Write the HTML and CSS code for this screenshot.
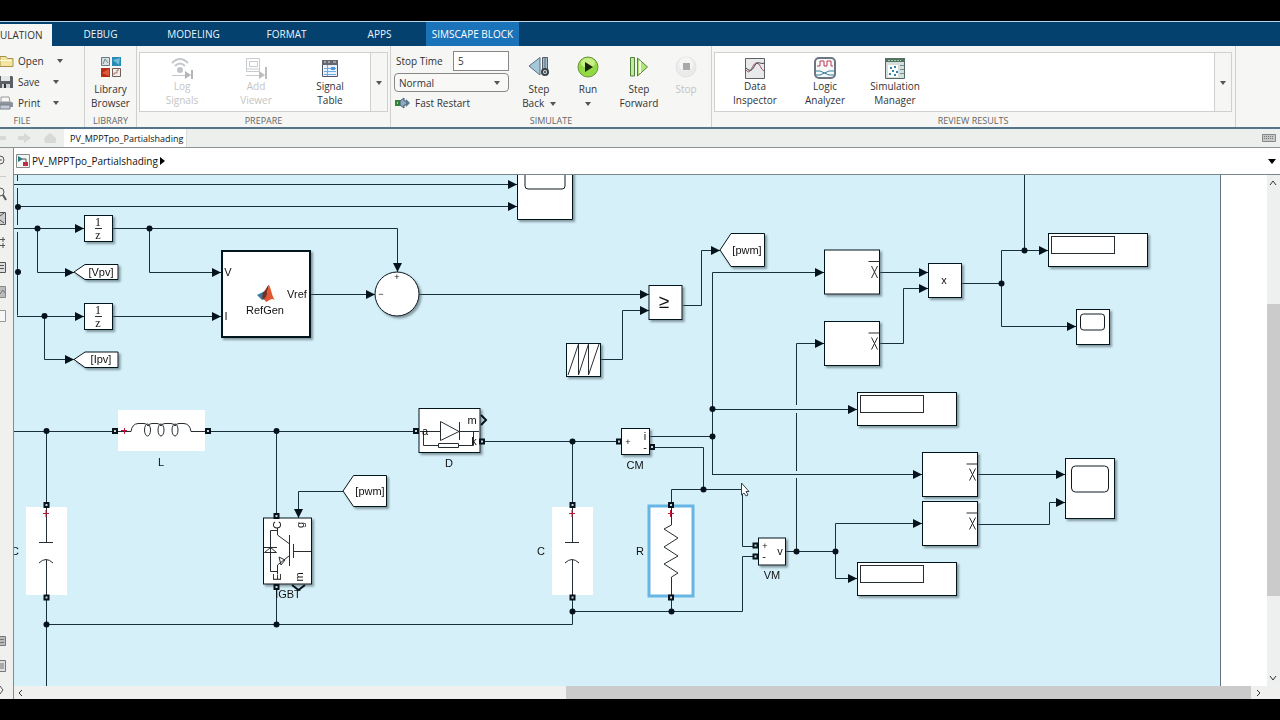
FILE: index.html
```html
<!DOCTYPE html>
<html lang="en">
<head>
<meta charset="utf-8">
<title>PV_MPPTpo_Partialshading</title>
<link rel="stylesheet" href="styles.css">
</head>
<body>
<div class="app">
  <nav class="tabs">
    <button class="tab tab-active">ULATION</button>
    <button class="tab">DEBUG</button>
    <button class="tab">MODELING</button>
    <button class="tab">FORMAT</button>
    <button class="tab">APPS</button>
    <button class="tab tab-context">SIMSCAPE BLOCK</button>
  </nav>

  <div class="ribbon">
    <section class="group group-file">
      <div class="group-body file-list">
        <button class="row-btn"><svg width="14" height="14" viewBox="0 0 14 14"><path d="M0 2.500H6L7.500 4.500H13V12.500H0Z" fill="#f3e5a0" stroke="#a8914a"/><path d="M0 6.500H11" stroke="#fffbe0"/></svg>Open<i class="caret"></i></button>
        <button class="row-btn"><svg width="14" height="14" viewBox="0 0 14 14"><path d="M0 1H12L13 2V13H0Z" fill="#5b5f66"/><path d="M1 1H10V6H1Z" fill="#e8e8ea"/><path d="M2 9H10V13H2Z" fill="#d0d2d6"/><path d="M4 9H6V13H4Z" fill="#333"/></svg>Save<i class="caret"></i></button>
        <button class="row-btn"><svg width="14" height="14" viewBox="0 0 14 14"><path d="M1 1H9L10 6H1Z" fill="#f7f7f7" stroke="#999"/><path d="M0 6H12L13 7V11H0Z" fill="#8d939c"/><path d="M0 9H10V13H0Z" fill="#c6cdd8" stroke="#7a828c"/></svg>Print<i class="caret"></i></button>
      </div>
      <h2 class="group-title">FILE</h2>
    </section>

    <section class="group group-library">
      <div class="group-body">
        <button class="big-btn low">
          <svg width="22" height="22" viewBox="0 0 22 22"><path d="M1.500 1.500H9.500V9.500H1.500Z" fill="#d8dfe2" stroke="#667b86"/><path d="M3 8L5 3 8 7" fill="none" stroke="#6d8b94"/><path d="M12 1H21V10H12Z" fill="#278cb5"/><path d="M13 4L20 2 19 9" fill="#71bcd6"/><path d="M1 12H10V21H1Z" fill="#b82d16"/><path d="M2 17L9 13V20Z" fill="#dd5b3d"/><path d="M12.500 12.500H20.500V20.500H12.500Z" fill="#eee" stroke="#765c58"/><path d="M14 19V17H17V14H19" fill="none" stroke="#a7776d"/></svg>
          <span>Library<br>Browser</span>
        </button>
      </div>
      <h2 class="group-title">LIBRARY</h2>
    </section>

    <section class="group group-prepare">
      <div class="group-body">
        <div class="gallery">
          <button class="big-btn" disabled>
            <svg width="22" height="22" viewBox="0 0 22 22"><g fill="none" stroke="#c4c7cc" stroke-width="2"><path d="M1 6Q9 -2 17 6M4 9Q9 4 14 9"/><path d="M1 18.500H15" stroke-width="1"/></g><circle cx="9" cy="13" r="3" fill="#c1c4c9"/><path d="M14 14L20 18 14 22ZM20 13H22V22H20Z" fill="#b5b5b8"/></svg>
            <span>Log<br>Signals</span>
          </button>
          <button class="big-btn" disabled>
            <svg width="22" height="22" viewBox="0 0 22 22"><g fill="none" stroke="#c8ccd0"><path d="M1.500 1.500H14.500V14.500H1.500ZM4.500 4.500H12.500V9.500H4.500ZM2 12H14M1 18.500H15"/></g><path d="M14 14L20 18 14 22ZM20 10H22V22H20Z" fill="#bdbdc0"/></svg>
            <span>Add<br>Viewer</span>
          </button>
          <button class="big-btn">
            <svg width="22" height="22" viewBox="0 0 22 22"><path d="M3.500 3.500H18.500V19.500H3.500Z" fill="#e9f2fc" stroke="#556"/><path d="M3 3H19V8H3Z" fill="#626770"/><path d="M5 5H7M9 5H11M14 5H17" stroke="#ddd"/><path d="M5 11.500H17M5 14.500H17M5 17.500H17" stroke="#6facdf" stroke-width="1"/><path d="M12 10H16V13H12Z" fill="#4c98db"/><path d="M8.500 8V19" stroke="#99b"/></svg>
            <span>Signal<br>Table</span>
          </button>
          <button class="more" aria-label="More prepare tools"><i class="caret"></i></button>
        </div>
      </div>
      <h2 class="group-title">PREPARE</h2>
    </section>

    <section class="group group-simulate">
      <div class="group-body simulate">
        <div class="settings">
          <div class="stop-row"><label for="stop">Stop Time</label><input id="stop" class="stop" type="text" value="5"></div>
          <div class="mode-wrap"><select class="mode" aria-label="Simulation mode"><option>Normal</option></select><i class="caret"></i></div>
          <button class="row-btn fast"><svg width="16" height="12" viewBox="0 0 16 12"><path d="M0 3H5V9H0Z" fill="#34833a"/><path d="M2 5H3V7H2Z" fill="#9fdd90"/><path d="M5 4L9 1V4H12V8H9V11L5 8Z" fill="#8fa9bf" stroke="#415a70"/><path d="M11 2L15 6 11 10Z" fill="#587891"/></svg>Fast Restart</button>
        </div>
        <div class="run-buttons">
          <button class="big-btn low">
            <svg width="22" height="22" viewBox="0 0 22 22"><path d="M1 10L12 1.500V19Z" fill="#a5c8d8" stroke="#566f80"/><path d="M14.500 1.500H19.500V18H14.500Z" fill="#a7bdca" stroke="#52606d"/><path d="M17 2V18" stroke="#526b7a"/><circle cx="17" cy="16" r="3" fill="#e5e8ea" stroke="#39434b" stroke-width="2"/><circle cx="17" cy="16" r="1" fill="#333"/></svg>
            <span>Step<br>Back <i class="caret caret-gap"></i></span>
          </button>
          <button class="big-btn low">
            <svg width="24" height="22" viewBox="0 0 24 22"><circle cx="12" cy="11" r="10" fill="#93d944" stroke="#659339"/><ellipse cx="12" cy="7" rx="7" ry="5" fill="#c8ef85"/><path d="M9 6L17 11 9 16Z" fill="#17240e"/></svg>
            <span>Run<br><i class="caret"></i></span>
          </button>
          <button class="big-btn low">
            <svg width="22" height="22" viewBox="0 0 22 22"><path d="M2.500 1.500H6.500V20H2.500Z" fill="#c6e7a3" stroke="#4f833a"/><path d="M9.500 2L19.500 11 9.500 20Z" fill="#aee579" stroke="#4f833a"/><path d="M12 5V17" stroke="#f1ffe0" stroke-width="2"/></svg>
            <span>Step<br>Forward</span>
          </button>
          <button class="big-btn low" disabled>
            <svg width="22" height="22" viewBox="0 0 22 22"><circle cx="11" cy="11" r="10" fill="#ebebeb" stroke="#e2e2e2"/><circle cx="11" cy="8" r="7" fill="#f5f5f5"/><path d="M8 7H15V14H8Z" fill="#a9a9a9"/></svg>
            <span>Stop</span>
          </button>
        </div>
      </div>
      <h2 class="group-title">SIMULATE</h2>
    </section>

    <section class="group group-review">
      <div class="group-body">
        <div class="gallery gallery-review">
          <button class="big-btn">
            <svg width="22" height="22" viewBox="0 0 22 22"><path d="M1.500 1.500H20.500V21.500H1.500Z" fill="#e8e9ea" stroke="#5e6266"/><path d="M2 13C7 20 8 5 13 6C17 7 16 12 20 14" fill="none" stroke="#a04a5b"/><path d="M2 11C7 16 9 12 11 8C14 3 17 8 20 6" fill="none" stroke="#333b42"/></svg>
            <span>Data<br>Inspector</span>
          </button>
          <button class="big-btn">
            <svg width="24" height="22" viewBox="0 0 24 22"><rect x="2" y="1" width="20" height="20" rx="4" fill="#f8fafa" stroke="#6c7582" stroke-width="2"/><path d="M4 9H7V4H11V9H14V4H18V9H20" fill="none" stroke="#bd3858"/><path d="M3 14H7L16 18H21M3 18H7L16 14H21" fill="none" stroke="#317f9d"/></svg>
            <span>Logic<br>Analyzer</span>
          </button>
          <button class="big-btn">
            <svg width="22" height="22" viewBox="0 0 22 22"><path d="M1.500 1.500H20.500V21.500H1.500Z" fill="#d4dfdc" stroke="#526967"/><path d="M1 1H21V5H1Z" fill="#547168"/><path d="M4 3.500H17" stroke="#a7d18c" stroke-dasharray="2 1"/><path d="M4 8H14V20H4Z" fill="#fff"/><path d="M6 10H8V12H6ZM10 9H12V11H10ZM8 13H10V15H8ZM12 14H14V16H12ZM5 16H7V18H5ZM10 17H12V19H10Z" fill="#3685ae"/><path d="M16 8.500H20M16 12.500H20M16 16.500H20" stroke="#778b88"/></svg>
            <span>Simulation<br>Manager</span>
          </button>
          <button class="more" aria-label="More review tools"><i class="caret"></i></button>
        </div>
      </div>
      <h2 class="group-title">REVIEW RESULTS</h2>
    </section>
  </div>

  <div class="docbar">
    <div class="history">
      <svg width="64" height="14" viewBox="0 0 64 14"><g fill="#d8d8d6"><path d="M0 5H6V9H0ZM18 5H24V2L31 7 24 12V9H18ZM44 7L50 2 56 7V12H45Z"/></g></svg>
    </div>
    <button class="doc-tab">PV_MPPTpo_Partialshading</button>
    <button class="keyboard" aria-label="Keyboard"><svg width="14" height="8" viewBox="0 0 14 8"><path d="M.5 .5H13.500V7.500H.5Z" fill="#c6c8c8" stroke="#868a8a"/><path d="M2 2.500H12M2 4.500H12" stroke="#777" stroke-dasharray="1 1"/></svg></button>
  </div>

  <div class="workspace">
    <aside class="palette">
      <svg width="13" height="180" viewBox="0 148 13 180"><g fill="none" stroke="#555"><circle cx="0" cy="160" r="4"/><path d="M-2 160H2"/><path d="M0 176.500H6" stroke="#ccc"/><circle cx="0" cy="192" r="4" stroke-width="1"/><path d="M3 195L6 200" stroke-width="2"/><path d="M-1 212.500H5.500V224.500H-1M0 216L4 213M0 220L4 223" fill="#ccc"/><path d="M0 239.500H5M0 245.500H5M3 237V242M3 243V248"/><path d="M-1 262.500H5.500V272.500H-1M0 265.500H4M0 268.500H4" fill="#ddd"/><path d="M-1 286.500H5.500V297.500H-1" fill="#bbb" stroke="#888"/><path d="M0 294L3 290 5 293" stroke="#777"/><path d="M-1 310.500H5.500V321.500H-1" fill="#f7f7f7" stroke="#999"/></g></svg>
      <svg width="13" height="64" viewBox="0 634 13 64"><g fill="#bbb" stroke="#777"><path d="M-1 635.500H5.500V644.500H-1M0 638.500H4M0 641.500H4"/><path d="M-1 659.500H5.500V670.500H-1M1 662V668M3 662V668" fill="#ddd"/><path d="M0 685L3 689 0 693" fill="none" stroke="#555"/></g></svg>
    </aside>
    <main class="editor">
      <div class="crumbs">
        <svg width="14" height="14" viewBox="0 0 14 14"><path d="M.5 .5H13.500V13.500H.5Z" fill="#f3f4f4" stroke="#888"/><path d="M2 2L7 5 2 8Z" fill="#237e82"/><path d="M6 5H10V8" fill="none" stroke="#555"/><path d="M7 8H12V12H7Z" fill="#c02c45"/></svg>
        <a class="crumb" href="#model">PV_MPPTpo_Partialshading</a>
        <svg width="6" height="8" viewBox="0 0 6 8"><path d="M0 0L5 4 0 8Z"/></svg>
        <button class="crumb-menu" aria-label="Model list"><svg width="8" height="5" viewBox="0 0 8 5"><path d="M0 0H8L4 5Z"/></svg></button>
      </div>
      <div class="view">
        <div class="canvas" id="model">
          <svg class="diagram" width="1206" height="511" viewBox="14 175 1206 511" role="img" aria-label="Block diagram">
            <defs>
              <marker id="arrow" viewBox="0 0 9 9" refX="9" refY="4.500" markerWidth="9" markerHeight="9" orient="auto" markerUnits="userSpaceOnUse"><path d="M0 0L9 4.500 0 9Z" fill="#06131b"/></marker>
              <filter id="shadow" x="-10%" y="-10%" width="130%" height="130%"><feDropShadow dx="2" dy="2" stdDeviation="1" flood-color="#4d5d66" flood-opacity=".6"/></filter>
              <g id="dot"><circle r="3" fill="#06131b"/></g>
              <g id="port"><rect x="-2" y="-2" width="4" height="4" fill="#c9d5da" stroke="#06131b" stroke-width="2"/></g>
              <g id="mean"><rect width="55" height="44" class="block"/><path d="M44 11.500H55M47 16L53 28M53 16L47 28" class="thin"/></g>
              <g id="display"><rect width="99" height="33" class="block"/><rect x="3" y="3" width="63" height="17" class="thin"/></g>
              <g id="cap"><rect x="-20" y="507" width="41" height="88" fill="#fff"/><path d="M.5 507V542.500M-7 542.500H7M-7 563Q0 556 7 563M.5 560V595" class="thin"/><path d="M-3 513.500H3M0 510V517" stroke="#c01838"/></g>
            </defs>

            <g class="wire">
              <path d="M17.500 175V181M17.500 188V225M17.500 232V315.500"/>
              <path d="M14 184.500H517" class="to"/><path d="M18 206.500H517" class="to"/>
              <path d="M14 228.500H84" class="to"/><path d="M17 316.500H84" class="to"/>
              <path d="M37.500 228V272.500H74" class="to"/><path d="M44.500 316V359.500H74" class="to"/>
              <path d="M113 228.500H397.500V272" class="to"/><path d="M149.500 228V272.500H221" class="to"/>
              <path d="M113 316.500H221" class="to"/><path d="M310 294.500H375" class="to"/><path d="M419 294.500H649" class="to"/>
              <path d="M601 359.500H622.500V310.500H649" class="to"/><path d="M683 305.500H701.500V250.500H720" class="to"/>
              <path d="M712.500 474.500V272.500H824" class="to"/><path d="M712.500 409.500H857" class="to"/>
              <path d="M649 436.500H712"/><path d="M712 474.500H922" class="to"/>
              <path d="M880 272.500H928" class="to"/><path d="M880 343.500H903.500V288.500H928" class="to"/>
              <path d="M961 283.500H1001.500V250.500H1048" class="to"/><path d="M1001.500 283V326.500H1076" class="to"/><path d="M1024.500 175V250"/>
              <path d="M796.500 551V478M796.500 471V413M796.500 405V343.500H824" class="to"/>
              <path d="M786 551.500H836"/><path d="M835.500 551V523.500H922" class="to"/><path d="M835.500 551V578.500H857" class="to"/>
              <path d="M978 474.500H1065" class="to"/><path d="M978 524.500H1049.500V502.500H1065" class="to"/>
              <path d="M14 431.500H115M208 431.500H416M46.500 431V504M46.500 598V686M276.500 431V516M276.500 587V624M46 624.500H572.500V598M482 441.500H619M572.500 441V504M572 611.500H742.500V556.500H755M671.500 598V611M652 447.500H703.500V489M671.500 504V489.500H742.500V546.500H755"/>
              <path d="M343 491.500H298.500V518" class="to"/>
            </g>

            <g filter="url(#shadow)">
              <rect x="84.500" y="215.500" width="28" height="26" class="block"/><rect x="84.500" y="303.500" width="28" height="26" class="block"/>
              <path d="M74 272L85 264.500H118V279.500H85Z" class="block"/><path d="M74 359.500L85 352H118V367.500H85Z" class="block"/>
              <rect x="222" y="251" width="88" height="86" class="block heavy"/>
              <circle cx="397" cy="294" r="22" class="block"/>
              <path d="M517.500 165H572.500V219.500H517.500Z" class="block"/>
              <rect x="649" y="285.500" width="33" height="34" class="block"/>
              <path d="M720 250L731 233.500H764.500V266.500H731Z" class="block"/>
              <rect x="566.500" y="343.500" width="34" height="33" class="block"/>
              <rect x="928.500" y="263.500" width="33" height="34" class="block"/>
              <use href="#mean" x="824.500" y="250"/><use href="#mean" x="824.500" y="321.500"/><use href="#mean" x="922.500" y="452.500"/><use href="#mean" x="922.500" y="501.500"/>
              <use href="#display" x="1048.500" y="233.500"/><use href="#display" x="857.500" y="392.500"/><use href="#display" x="857.500" y="562.500"/>
              <rect x="1076.500" y="309.500" width="33" height="35" class="block"/><rect x="1065.500" y="458.500" width="49" height="60" class="block"/>
              <rect x="419" y="408.500" width="61" height="44" class="block"/><rect x="621.500" y="428.500" width="28" height="26" class="block"/>
              <rect x="758.500" y="538" width="27" height="27" class="block"/><path d="M343 491L353.500 475.500H386.500V506.500H353.500Z" class="block"/>
              <rect x="263.500" y="518" width="48" height="66" class="block"/>
            </g>

            <g class="screen"><path d="M525 170V186Q525 189 528 189H562Q565 189 565 186V170"/><rect x="1080.500" y="314" width="24" height="16" rx="3"/><rect x="1071.500" y="466" width="37" height="26" rx="4"/></g>
            <path d="M568 375L578.500 344V375L588.500 344V375L599 344" class="thin"/>
            <path d="M95 228.500H102M95 316.500H102" class="thin"/>

            <g transform="translate(257 285)"><path d="M0 10L6 7 11 13 5 15Z" fill="#357f9c"/><path d="M6 7C9 6 10 0 12 0C10 6 11 10 8 15L5 13Z" fill="#772f26"/><path d="M12 0C14 3 15 12 18 15C14 12 12 16 9 17L7 14C11 11 10 5 12 0Z" fill="#df5732"/></g>

            <rect x="118" y="410" width="87" height="41" fill="#fff"/>
            <path d="M118 431.500H131Q132 424 138 423.500H144Q147 423.500 148 426Q149 423.500 152 423.500H157Q160 423.500 161 426Q162 423.500 165 423.500H171Q174 423.500 175 426Q176 423.500 179 423.500H184Q190 424 191 431.500H205" class="thin"/>
            <g class="thin"><ellipse cx="147.500" cy="430" rx="3" ry="6"/><ellipse cx="161" cy="430" rx="3" ry="6"/><ellipse cx="175" cy="430" rx="3" ry="6"/></g>
            <path d="M121 430.500H127M124.500 428V434" stroke="#c01838"/>
            <use href="#cap" x="46"/><use href="#cap" x="572"/>

            <rect x="649" y="506" width="44" height="90" fill="#fff" stroke="#66b5e3" stroke-width="3"/>
            <path d="M671.500 505V525L664 529 678 538 664 547 678 556 664 564 678 573 671.500 577V597" class="thin"/>
            <path d="M668 513.500H674M670.500 510V517" stroke="#c01838"/>

            <path d="M420 431.500H440.500V421.500L459 431.500 440.500 440.500V431M459.500 422V440M459 431.500H479M423.500 432V445.500H438M458 445.500H473.500V431M438.500 443.500H458.500V447.500H438.500Z" class="thin"/>
            <path d="M481 415L486 420 481 425" fill="none" stroke="#06131b" stroke-width="2"/>

            <path d="M277.500 528V535L289 543.500M289.500 535V566M293.500 544V558M294 551.500H311M289 556L277.500 565V574M277 530.500H270.500V571.500H277M264 547.500H277M264.500 552.500H276.500L270.500 547.500ZM279 557L281 565 285 560Z" class="thin"/>
            <path d="M292 585L298.500 590 305 585" fill="none" stroke="#06131b" stroke-width="2"/>

            <g><use href="#dot" x="18" y="207"/><use href="#dot" x="18" y="272"/><use href="#dot" x="37.500" y="228.500"/><use href="#dot" x="44.500" y="316"/><use href="#dot" x="149.500" y="228.500"/><use href="#dot" x="712.500" y="409"/><use href="#dot" x="712.500" y="436.500"/><use href="#dot" x="1001.500" y="283.500"/><use href="#dot" x="1024.500" y="250.500"/><use href="#dot" x="46.500" y="431"/><use href="#dot" x="276.500" y="431"/><use href="#dot" x="572.500" y="441.500"/><use href="#dot" x="46.500" y="624.500"/><use href="#dot" x="276.500" y="624.500"/><use href="#dot" x="572.500" y="611.500"/><use href="#dot" x="671.500" y="611.500"/><use href="#dot" x="703.500" y="489.500"/><use href="#dot" x="796.500" y="551.500"/><use href="#dot" x="835.500" y="551.500"/></g>
            <g><use href="#port" x="115" y="431"/><use href="#port" x="208" y="431"/><use href="#port" x="46.500" y="505"/><use href="#port" x="46.500" y="597.500"/><use href="#port" x="572.500" y="505"/><use href="#port" x="572.500" y="597.500"/><use href="#port" x="671" y="505"/><use href="#port" x="671" y="597.500"/><use href="#port" x="276.500" y="516"/><use href="#port" x="276.500" y="587"/><use href="#port" x="416" y="431"/><use href="#port" x="482" y="441.500"/><use href="#port" x="619" y="441.500"/><use href="#port" x="652" y="447"/><use href="#port" x="755.500" y="545.500"/><use href="#port" x="755.500" y="556.500"/></g>

            <g class="serif"><text x="98" y="226">1</text><text x="98" y="239">z</text><text x="98" y="314">1</text><text x="98" y="327">z</text></g>
            <g class="label">
              <text x="101" y="276">[Vpv]</text><text x="101" y="363">[Ipv]</text><text x="228" y="276">V</text><text x="226" y="320">I</text><text x="297" y="298">Vref</text><text x="265" y="314">RefGen</text>
              <text x="747" y="254">[pwm]</text><text x="370" y="495">[pwm]</text><text x="944" y="284">x</text>
              <text x="161" y="466">L</text><text x="449" y="467">D</text><text x="635" y="469">CM</text><text x="541" y="555">C</text><text x="15" y="555">C</text><text x="640" y="555">R</text><text x="772" y="579">VM</text><text x="288" y="598">IGBT</text>
              <text x="472" y="424">m</text><text x="474" y="445">k</text><text x="425" y="435">a</text><text x="645" y="440">i</text><text x="645" y="451">-</text><text x="764" y="560">-</text><text x="780" y="555">v</text>
              <text transform="translate(281 525) rotate(-90)">C</text><text transform="translate(304 525) rotate(-90)">g</text><text transform="translate(281 577) rotate(-90)">E</text><text transform="translate(303 577) rotate(-90)">m</text>
            </g>
            <g class="sign"><text x="397" y="280">+</text><text x="381" y="297">−</text><text x="628" y="445">+</text><text x="765" y="549">+</text></g>
            <text x="664" y="308" class="relop">≥</text>
            <path d="M741.500 483V495L744 493 746 496 748 495 746 491.500H749Z" fill="#fff" stroke="#34434b"/>
          </svg>
        </div>
        <div class="vscroll">
          <svg width="12" height="16" viewBox="0 0 12 16"><path d="M3 10L6 6 9 10" class="chev"/></svg>
          <div class="vtrack"><div class="vthumb"></div></div>
          <svg width="12" height="16" viewBox="0 0 12 16"><path d="M3 6L6 10 9 6" class="chev"/></svg>
        </div>
        <div class="hscroll">
          <svg width="14" height="12" viewBox="0 0 14 12"><path d="M8 4L5 7 8 10" class="chev"/></svg>
          <div class="htrack"><div class="hthumb"></div></div>
          <svg width="16" height="12" viewBox="0 0 16 12"><path d="M6 4L9 7 6 10" class="chev"/></svg>
        </div>
        <div class="corner"></div>
      </div>
    </main>
  </div>
</div>
</body>
</html>
```

FILE: styles.css
```css
* { box-sizing: border-box; }
body { margin: 0; background: #000; color: #333; font: 10px/14px "Open Sans", "Noto Sans", sans-serif; }
button, input, select { font: inherit; color: inherit; margin: 0; padding: 0; border: 0; background: none; }
svg { display: block; flex: none; }
.app { height: 100vh; padding: 21px 0; display: flex; flex-direction: column; overflow: hidden; }

.tabs { display: flex; height: 25px; flex: none; background: #04416f; border-top: 1px solid #b4d6ea; }
.tab { width: 93px; color: #eef5fa; }
.tab-active { width: 52px; margin: 2px 2px 0 0; background: #f6f6f4; color: #333; text-align: left; }
.tab-context { background: #1a72b8; color: #fff; }

.ribbon { display: flex; height: 83px; flex: none; background: #f6f6f4; border-bottom: 2px solid #55758c; }
.group { display: flex; flex-direction: column; padding-top: 6px; border-right: 1px solid #d0d0ce; }
.group-body { flex: 1; min-height: 0; }
.group-title { margin: 0; height: 12px; font-size: 9px; line-height: 12px; font-weight: 400; text-align: center; color: #666; }
.group-file { width: 85px; padding-top: 4px; }
.group-file .group-title { padding-right: 40px; }
.group-library { width: 52px; }
.group-prepare { width: 254px; padding-left: 2px; padding-right: 2px; }
.group-simulate { width: 321px; }
.group-review { flex: 1; margin-right: 44px; padding-left: 2px; padding-right: 3px; }

.caret { display: inline-block; border: 3px solid transparent; border-top: 4px solid #555; border-bottom: 0; vertical-align: middle; }
.caret-gap { margin-left: 3px; }
.file-list { display: flex; flex-direction: column; padding-right: 15px; }
.row-btn { display: flex; align-items: center; gap: 4px; height: 21px; }
.row-btn .caret { margin-left: 9px; }
.big-btn { width: 100%; display: flex; flex-direction: column; align-items: center; gap: 0; padding-top: 4px; white-space: nowrap; }
.big-btn.low { gap: 4px; }
.big-btn:disabled { color: #c4c4c4; }
.gallery { height: 60px; display: flex; border: 1px solid #d0d0ce; background: #fff; }
.gallery .big-btn { width: 74px; margin-left: 0; }
.gallery .big-btn:first-child { margin-left: 5px; }
.gallery .more { width: 17px; margin-left: auto; border-left: 1px solid #d0d0ce; background: #f6f6f4; }
.gallery-review .big-btn { width: 70px; }

.simulate { display: flex; }
.settings { width: 118px; padding-left: 3px; }
.stop-row { display: flex; align-items: center; justify-content: space-between; padding-left: 2px; height: 18px; }
.stop { width: 56px; height: 20px; padding-left: 4px; background: #fff; border: 1px solid #888; }
.mode-wrap { position: relative; margin-top: 3px; }
.mode { appearance: none; width: 100%; height: 19px; padding-left: 4px; border: 1px solid #888; border-radius: 4px; background: #f8f8f6; }
.mode-wrap .caret { position: absolute; right: 9px; top: 8px; pointer-events: none; }
.fast { margin-left: 1px; }
.run-buttons { display: grid; grid-template-columns: 48px 50px 52px 42px; padding-left: 6px; align-items: start; }

.docbar { display: flex; align-items: stretch; height: 19px; flex: none; background: #ecefec; border-bottom: 1px solid #8d9292; }
.history { display: flex; align-items: center; }
.doc-tab { padding: 2px 3px 0 6px; background: #fff; color: #111; font-size: 9px; border-right: 1px solid #ddd; }
.keyboard { margin-left: auto; padding: 0 4px; }

.workspace { flex: 1; min-height: 0; display: flex; }
.palette { width: 14px; flex: none; background: #f0f0ef; border-right: 1px solid #858b8e; display: flex; flex-direction: column; justify-content: space-between; overflow: hidden; }
.editor { flex: 1; min-width: 0; display: flex; flex-direction: column; }
.crumbs { display: flex; align-items: center; height: 27px; flex: none; padding: 0 4px 0 2px; gap: 2px; background: #fff; border-bottom: 1px solid #78868d; }
.crumb { color: #111; text-decoration: none; }
.crumb-menu { margin-left: auto; }
.view { flex: 1; min-height: 0; display: grid; grid-template-columns: 1fr 13px; grid-template-rows: 1fr 13px; }
.canvas { background: #fff; overflow: hidden; min-width: 0; min-height: 0; }
.diagram { box-sizing: content-box; background: #d5f0f9; border-right: 1px solid #62747d; }
.vscroll { display: flex; flex-direction: column; background: #edf0ee; }
.vtrack { flex: 1; }
.vthumb { width: 100%; height: 61%; margin-top: 113px; background: #cbcbcb; }
.hscroll { display: flex; background: #f0f0ee; overflow: hidden; }
.htrack { flex: 1; display: flex; justify-content: flex-end; }
.hthumb { width: 56%; background: #cbcbcb; }
.corner { background: #f0f0ee; }
.chev { fill: none; stroke: #333; stroke-width: 1; }

.wire path { fill: none; stroke: #17303c; stroke-width: 1; }
.wire .to { marker-end: url(#arrow); }
.block { fill: #fff; stroke: #06131b; stroke-width: 1; }
.heavy { stroke-width: 2; }
.thin { fill: none; stroke: #262e33; stroke-width: 1; }
.screen { fill: #fff; stroke: #101a20; stroke-width: 1; }
.label { font: 11px "Liberation Sans", Arial, sans-serif; fill: #111; text-anchor: middle; }
.sign { font: 9px "Liberation Sans", Arial, sans-serif; fill: #111; text-anchor: middle; }
.serif { font: 12px "Liberation Serif", serif; fill: #111; text-anchor: middle; }
.relop { font: 19px "Liberation Sans", Arial, sans-serif; fill: #111; text-anchor: middle; }
```
